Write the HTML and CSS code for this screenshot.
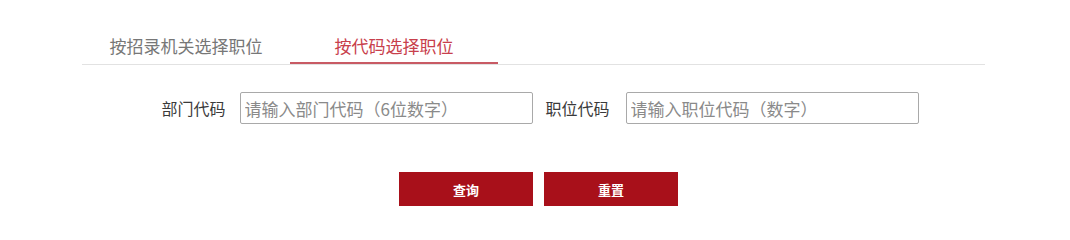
FILE: index.html
```html
<!DOCTYPE html>
<html lang="zh-CN">
<head>
<meta charset="utf-8">
<title>职位查询</title>
<link rel="stylesheet" href="styles.css">
</head>
<body>
<div class="page">
  <div class="tabs">
    <div class="tab">按招录机关选择职位</div>
    <div class="tab active">按代码选择职位</div>
  </div>
  <div class="form-row">
    <label class="label">部门代码</label>
    <input class="field" type="text" placeholder="请输入部门代码（6位数字）">
    <label class="label label-2">职位代码</label>
    <input class="field" type="text" placeholder="请输入职位代码（数字）">
  </div>
  <div class="actions">
    <button class="btn" type="button">查询</button>
    <button class="btn" type="button">重置</button>
  </div>
</div>
</body>
</html>
```
FILE: styles.css
```css
html, body {
  margin: 0;
  padding: 0;
  background: #ffffff;
}
body {
  font-family: "Noto Sans CJK SC", "Noto Sans", sans-serif;
  color: #333;
}
.page {
  width: 1070px;
  height: 240px;
  padding-top: 33px;
  box-sizing: border-box;
}
.tabs {
  margin-left: 82px;
  width: 903px;
  display: flex;
  border-bottom: 1px solid #e2e2e2;
}
.tab {
  width: 208px;
  height: 31px;
  line-height: 26px;
  font-size: 17px;
  color: #777;
  text-align: center;
}
.tab.active {
  color: #c8404c;
  border-bottom: 2px solid #c85a64;
  height: 29px;
  margin-bottom: -1px;
}
.form-row {
  display: flex;
  align-items: center;
  justify-content: center;
  margin-top: 27px;
  padding-left: 10px;
}
.label {
  font-size: 16px;
  color: #3a3a3a;
  margin-right: 14px;
}
.label-2 {
  margin-left: 13px;
  margin-right: 16px;
}
.field {
  width: 293px;
  height: 32px;
  box-sizing: border-box;
  border: 1px solid #a9a9a9;
  border-radius: 2px;
  padding: 0 4px;
  font-family: "Noto Sans CJK SC", "Noto Sans", sans-serif;
  font-size: 17px;
  color: #333;
  outline: none;
}
.field::placeholder {
  color: #8a8a8a;
}
.actions {
  display: flex;
  justify-content: center;
  gap: 11px;
  margin-top: 48px;
  padding-left: 7px;
}
.btn {
  width: 134px;
  height: 34px;
  border: none;
  background: #a8101a;
  color: #fff;
  font-family: "Noto Sans CJK SC", "Noto Sans", sans-serif;
  font-weight: bold;
  font-size: 13px;
  cursor: pointer;
}
```
